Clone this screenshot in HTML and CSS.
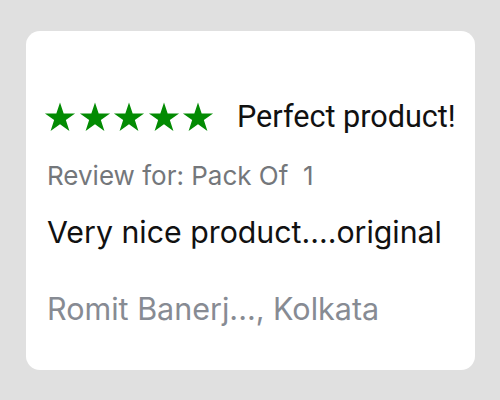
FILE: index.html
```html
<!DOCTYPE html>
<html>
<head>
<meta charset="utf-8">
<link rel="stylesheet" href="styles.css">
</head>
<body>
<div class="card">
  <div class="rating-row">
    <div class="stars">
      <svg class="star" viewBox="0 0 24 24"><path d="M12 1.2l2.75 8.1h8.55l-6.9 5 2.65 8.2L12 17.4l-7.05 5.1 2.65-8.2-6.9-5h8.55z"/></svg>
      <svg class="star" viewBox="0 0 24 24"><path d="M12 1.2l2.75 8.1h8.55l-6.9 5 2.65 8.2L12 17.4l-7.05 5.1 2.65-8.2-6.9-5h8.55z"/></svg>
      <svg class="star" viewBox="0 0 24 24"><path d="M12 1.2l2.75 8.1h8.55l-6.9 5 2.65 8.2L12 17.4l-7.05 5.1 2.65-8.2-6.9-5h8.55z"/></svg>
      <svg class="star" viewBox="0 0 24 24"><path d="M12 1.2l2.75 8.1h8.55l-6.9 5 2.65 8.2L12 17.4l-7.05 5.1 2.65-8.2-6.9-5h8.55z"/></svg>
      <svg class="star" viewBox="0 0 24 24"><path d="M12 1.2l2.75 8.1h8.55l-6.9 5 2.65 8.2L12 17.4l-7.05 5.1 2.65-8.2-6.9-5h8.55z"/></svg>
    </div>
    <div class="title">Perfect product!</div>
  </div>
  <div class="variant">Review for: Pack Of&nbsp; 1</div>
  <div class="body">Very nice product....original</div>
  <div class="author">Romit Banerj..., Kolkata</div>
</div>
</body>
</html>
```
FILE: styles.css
```css
html, body {
  margin: 0;
  padding: 0;
  background: #e0e0e0;
}
body {
  padding: 31px 25px 30px 26px;
  font-family: Inter, Roboto, "Liberation Sans", sans-serif;
}
.card {
  width: 449px;
  height: 339px;
  box-sizing: border-box;
  background: #ffffff;
  border-radius: 14px;
  padding: 68px 0 0 21px;
}
.rating-row {
  display: flex;
  align-items: center;
  margin-left: -3px;
  height: 36px;
}
.stars {
  display: flex;
  gap: 2.5px;
}
.star {
  width: 32px;
  height: 32px;
  fill: #038b03;
  display: block;
}
.title {
  margin-left: 23px;
  font-family: Roboto, "Liberation Sans", sans-serif;
  font-size: 30.6px;
  color: #111;
  line-height: 36px;
}
.variant {
  margin-top: 25px;
  font-size: 26px;
  color: #74777b;
  line-height: 32px;
}
.body {
  margin-top: 22px;
  font-size: 30.3px;
  color: #111;
  line-height: 36px;
}
.author {
  margin-top: 41px;
  font-size: 30.5px;
  color: #878b93;
  line-height: 36px;
}
```
